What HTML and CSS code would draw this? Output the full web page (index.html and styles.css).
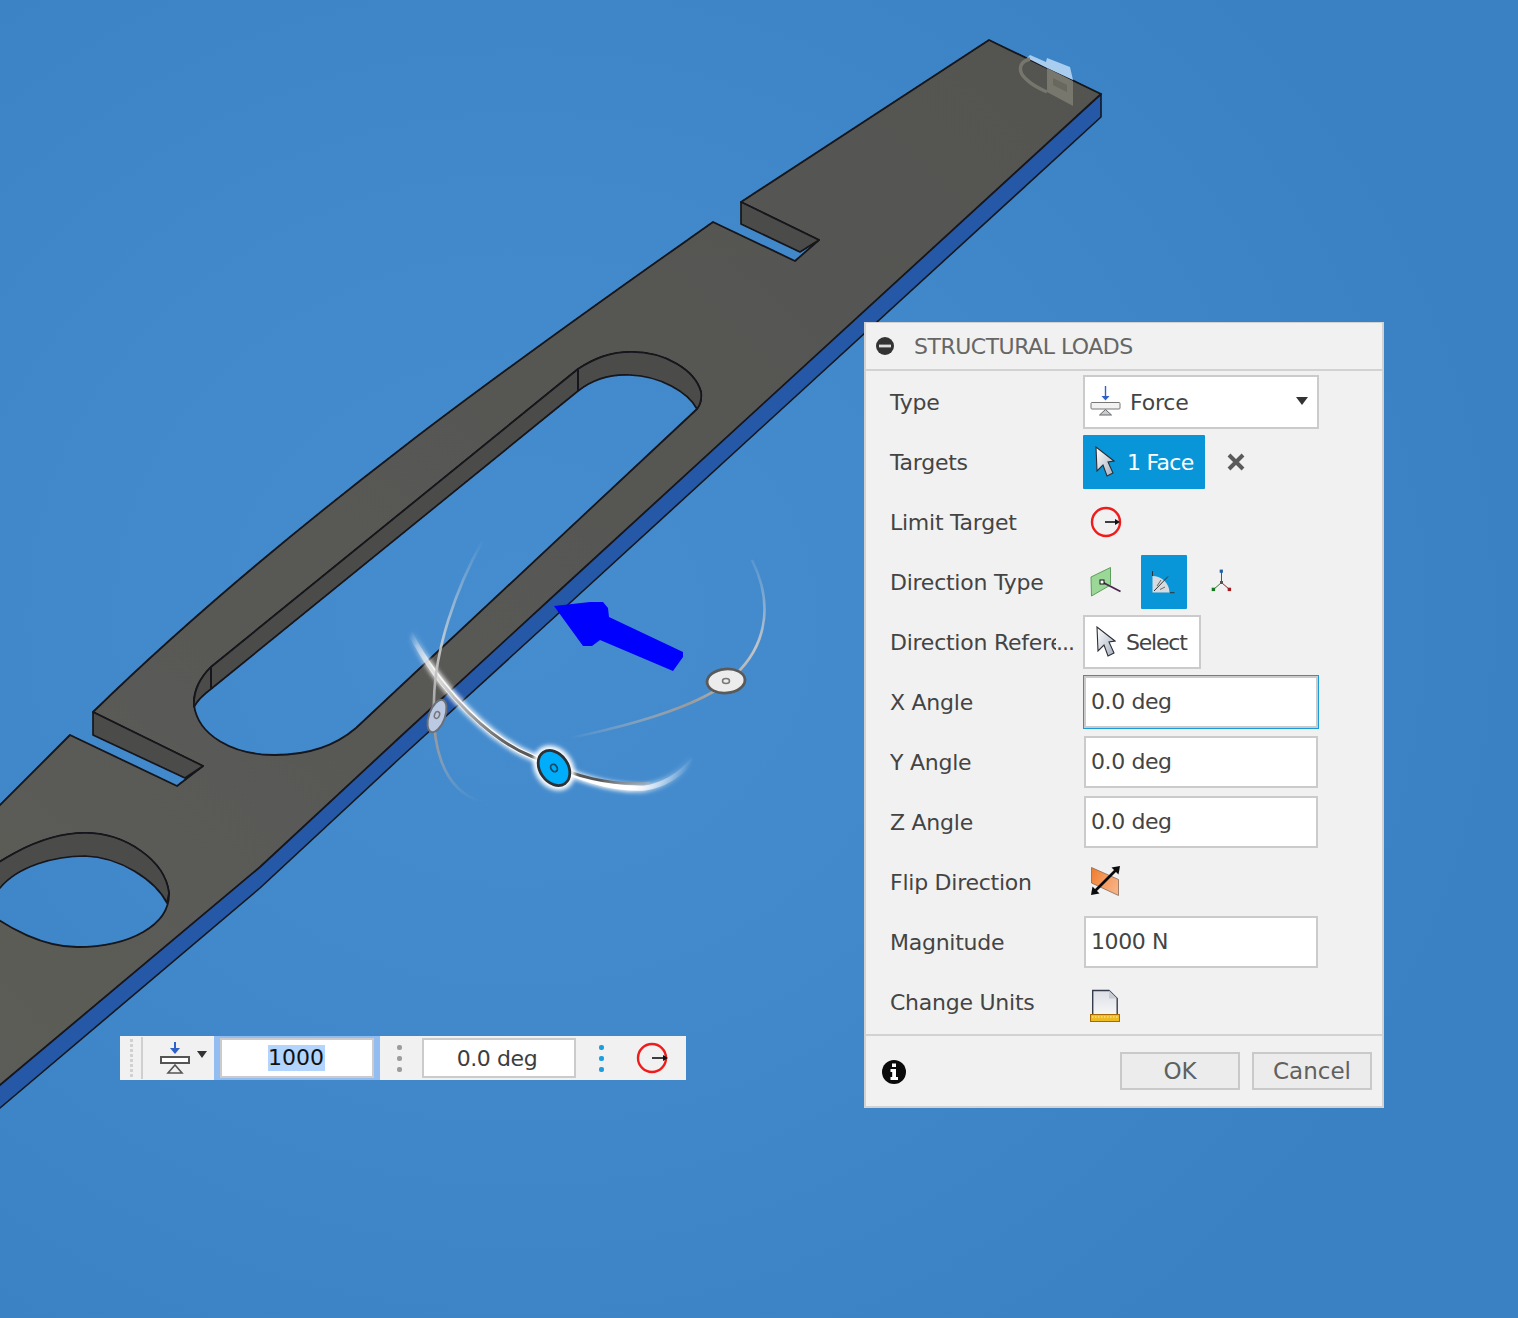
FILE: index.html
```html
<!DOCTYPE html>
<html lang="en">
<head>
<meta charset="utf-8">
<title>Structural Loads</title>
<link rel="stylesheet" href="styles.css">
</head>
<body>
<main class="scene">
  <svg class="model" width="1518" height="1318" viewBox="0 0 1518 1318">
    <defs>
      <linearGradient id="faceShade" x1="0" y1="1" x2="1" y2="0">
        <stop offset="0" stop-color="#5c5c58"/>
        <stop offset="1" stop-color="#535350"/>
      </linearGradient>
      <filter id="soft" x="-20%" y="-20%" width="140%" height="140%"><feGaussianBlur stdDeviation="2.2"/></filter>
      <filter id="soft1" x="-20%" y="-20%" width="140%" height="140%"><feGaussianBlur stdDeviation="0.7"/></filter>
      <filter id="edgeSoft" x="-5%" y="-5%" width="110%" height="110%"><feGaussianBlur stdDeviation="0.45"/></filter>
      <linearGradient id="fadeA" gradientUnits="userSpaceOnUse" x1="410" y1="633" x2="693" y2="760">
        <stop offset="0" stop-color="#fff" stop-opacity="0"/>
        <stop offset="0.12" stop-color="#fff" stop-opacity=".85"/>
        <stop offset="0.85" stop-color="#fff"/>
        <stop offset="1" stop-color="#fff" stop-opacity="0"/>
      </linearGradient>
      <linearGradient id="coreA" gradientUnits="userSpaceOnUse" x1="410" y1="633" x2="693" y2="760">
        <stop offset="0" stop-color="#ddd" stop-opacity="0"/>
        <stop offset="0.2" stop-color="#c4c4c4"/>
        <stop offset="0.45" stop-color="#5a5a5a"/>
        <stop offset="0.75" stop-color="#555"/>
        <stop offset="0.95" stop-color="#ccc" stop-opacity=".4"/>
      </linearGradient>
      <linearGradient id="fadeB" gradientUnits="userSpaceOnUse" x1="760" y1="555" x2="570" y2="738">
        <stop offset="0" stop-color="#ddd" stop-opacity="0"/>
        <stop offset="0.25" stop-color="#c4c4c4"/>
        <stop offset="0.6" stop-color="#9a9a9a"/>
        <stop offset="1" stop-color="#ccc" stop-opacity="0"/>
      </linearGradient>
      <linearGradient id="fadeC" gradientUnits="userSpaceOnUse" x1="483" y1="540" x2="480" y2="802">
        <stop offset="0" stop-color="#ddd" stop-opacity="0"/>
        <stop offset="0.4" stop-color="#d4d4d4" stop-opacity=".85"/>
        <stop offset="0.75" stop-color="#999"/>
        <stop offset="1" stop-color="#bbb" stop-opacity="0"/>
      </linearGradient>
    </defs>

    <g filter="url(#edgeSoft)">
      <!-- side band -->
      <path class="band" d="M1101,94 L1101,117 L560,612 L400,758 L260,888 L0,1108 L-30,1133 L-30,1110 Z"/>

      <!-- top face with holes -->
      <path class="face" fill="url(#faceShade)" fill-rule="evenodd" d="M989,40 L1101,94 L560,590 L400,737 L260,867 L0,1085 L-30,1110 L-30,835 L70,735 L177,786 L203,766 L93,712 C300,510 560,330 713,222 L795,261 L819,240 L741,202 Z
        M211,667 L578,369 C595,358 610,352 632,352 C665,352 695,370 701,392 C702,400 700,405 697,409 L356,728 C335,746 310,755 275,755 C232,755 198,735 194,705 C193,690 200,678 211,667 Z
        M-40,890 C-20,875 30,833 85,833 C125,833 165,860 169,893 C170,925 130,947 77,947 C50,947 10,935 -40,890 Z"/>

      <!-- slot inner walls -->
      <path class="wall" d="M211,667 L578,369 C595,358 610,352 632,352 C665,352 695,370 701,392 C702,400 700,405 697,409 C688,392 660,376 630,375 C610,374 592,380 578,391 L211,689 C203,695 197,701 194,707 C193,690 200,678 211,667 Z"/>
      <path class="edge" d="M578,369 L578,391 M211,667 L211,689"/>

      <!-- round hole wall -->
      <path class="wall" d="M-40,890 C-20,875 30,833 85,833 C125,833 165,860 169,893 L167,903 C155,880 120,857 85,856 C55,856 18,866 0,888 L-40,900 Z"/>

      <!-- notches -->
      <path class="wall" d="M741,202 L819,240 L800,252 L741,224 Z"/>
      <path class="wall" d="M93,712 L203,766 L185,778 L93,735 Z"/>

      <!-- ghost logo on the far end -->
      <path class="ghost-blue" d="M1027,58 L1030,55 L1046,62 L1047,58 L1070,67 L1073,80 L1047,68 Z"/>
      <path class="ghost-face" d="M1047,68 L1073,81 L1073,106 L1047,92 Z"/>
      <path class="ghost-hole" d="M1053,78 L1067,85 L1067,92 L1053,85 Z"/>
      <path class="ghost-arc" d="M1030,59 C1018,62 1018,72 1026,79 C1032,85 1040,89 1047,92"/>

      <!-- gizmo arcs -->
      <path class="arc-glow" stroke="url(#fadeA)" filter="url(#soft)" d="M410,633 C440,690 490,740 533,757 C575,777 610,790 645,788 C665,785 680,775 693,760"/>
      <path class="arc-glow-thin" stroke="url(#fadeA)" filter="url(#soft1)" d="M410,633 C440,690 490,740 533,757 C575,777 610,790 645,788 C665,785 680,775 693,760"/>
      <path class="arc-core" stroke="url(#coreA)" d="M416,645 C445,695 490,740 533,757 C575,777 610,786 650,783"/>
      <path class="arc-thin" stroke="url(#fadeB)" d="M752,560 C772,600 768,640 740,670 C725,690 680,715 570,738"/>
      <path class="arc-thin" stroke="url(#fadeC)" d="M483,540 C455,590 435,650 434,700 C432,740 440,790 482,802"/>

      <!-- handles -->
      <ellipse class="h-glow" cx="554" cy="768" rx="19" ry="24" transform="rotate(-35 554 768)" filter="url(#soft)"/>
      <ellipse class="h-blue" cx="554" cy="768" rx="14" ry="19" transform="rotate(-35 554 768)"/>
      <ellipse class="h-mark" cx="554" cy="768" rx="3" ry="4" transform="rotate(-35 554 768)"/>
      <ellipse class="h-white" cx="726" cy="681" rx="19" ry="12" transform="rotate(-5 726 681)"/>
      <ellipse class="h-mark-l" cx="726" cy="681" rx="3.5" ry="2.5"/>
      <ellipse class="h-pale" cx="437" cy="716" rx="8" ry="17" transform="rotate(20 437 716)"/>
      <ellipse class="h-mark-l" cx="437" cy="715" rx="2.5" ry="3.5" transform="rotate(20 437 715)"/>

      <!-- load arrow -->
      <polygon class="load" points="554,606 590,602 603,602 608,608 609,617 683,652 683,657 673,671 600,640 592,646 583,646"/>
    </g>
  </svg>

  <section class="panel">
    <header class="panel-head">
      <svg width="18" height="18" viewBox="876 337 18 18">
        <circle cx="885" cy="346" r="9" fill="#333"/>
        <rect x="879" y="344.6" width="12" height="2.8" fill="#ddd"/>
      </svg>
      <h1 class="panel-title">STRUCTURAL LOADS</h1>
    </header>

    <div class="rows">
      <div class="row">
        <span class="label">Type</span>
        <div class="field select">
          <svg width="32" height="32" viewBox="1090 386 32 32">
            <line x1="1105.5" y1="386" x2="1105.5" y2="397" stroke="#2f62c4" stroke-width="1.4"/>
            <polygon points="1101.5,396 1109.5,396 1105.5,400.5" fill="#2f62c4"/>
            <rect x="1091" y="402.5" width="29" height="6.5" rx="1" fill="#f2f2f2" stroke="#777"/>
            <polygon points="1105.5,409.5 1099.5,415 1111.5,415" fill="#c9cdd2" stroke="#666"/>
          </svg>
          <span class="field-text">Force</span>
          <span class="caret"></span>
        </div>
      </div>

      <div class="row">
        <span class="label">Targets</span>
        <div class="pick-group">
          <div class="pick pick-on">
            <svg width="20" height="32" viewBox="1096 446 20 32">
              <defs>
                <linearGradient id="curA" x1="0" y1="0" x2="1" y2="1">
                  <stop offset="0" stop-color="#fff"/><stop offset="1" stop-color="#a6afbe"/>
                </linearGradient>
              </defs>
              <path d="M1097,447 L1098,471 L1104,465 L1108,476 L1114,473 L1109,462 L1115,461 Z" fill="url(#curA)" stroke="#2c2f36" stroke-width="1.1"/>
            </svg>
            <span class="pick-text">1 Face</span>
          </div>
          <svg class="clear" width="18" height="18" viewBox="1228 453 18 18">
            <path d="M1230,455 L1244,469 M1244,455 L1230,469" stroke="#5a5a5a" stroke-width="4"/>
          </svg>
        </div>
      </div>

      <div class="row">
        <span class="label">Limit Target</span>
        <svg class="icon-limit" width="32" height="32" viewBox="1090 506 32 32">
          <circle cx="1106" cy="522" r="14" fill="none" stroke="#f01c1c" stroke-width="2.4"/>
          <line x1="1105" y1="522" x2="1116" y2="522" stroke="#111" stroke-width="1.6"/>
          <polygon points="1115,519 1120,522 1115,525" fill="#111"/>
        </svg>
      </div>

      <div class="row">
        <span class="label">Direction Type</span>
        <div class="dir-group">
          <svg width="32" height="32" viewBox="1090 566 32 32">
            <polygon points="1091,577 1110.5,567.5 1110.5,585 1091.5,596" fill="#9bd898" stroke="#5d9e5d"/>
            <line x1="1102" y1="582" x2="1120.5" y2="591.5" stroke="#4a2350" stroke-width="1.8"/>
            <rect x="1100" y="580" width="4" height="4" fill="#fff" stroke="#111"/>
          </svg>
          <div class="dir-on">
            <svg width="34" height="30" viewBox="1149 569 34 30">
              <path d="M1152.5,592.5 L1152.5,576 A17,17 0 0 1 1169.5,592.5 Z" fill="#d7dade"/>
              <path d="M1152.5,571 V576 M1170,592.7 H1174.5 M1154,591 L1168,576.5" stroke="#333" stroke-width="1" fill="none"/>
              <path d="M1157,586 L1161,580 M1160,589.5 L1165,587" stroke="#666" stroke-width="1" fill="none"/>
            </svg>
          </div>
          <svg class="triad" width="24" height="26" viewBox="1210 569 24 26">
            <line x1="1221.5" y1="571" x2="1221.5" y2="582.5" stroke="#2a5f9e" stroke-width="1"/>
            <line x1="1221.5" y1="582.5" x2="1213.5" y2="589.5" stroke="#2b7a2b" stroke-width="1"/>
            <line x1="1221.5" y1="582.5" x2="1229.5" y2="589.5" stroke="#9a2222" stroke-width="1"/>
            <rect x="1219.7" y="569.6" width="3.2" height="3.2" fill="#1f5fa8"/>
            <rect x="1211.7" y="587.7" width="3.4" height="3.4" fill="#14791c"/>
            <rect x="1227.7" y="587.7" width="3.4" height="3.4" fill="#a01c20"/>
            <rect x="1220" y="581" width="3" height="3" fill="#555"/>
          </svg>
        </div>
      </div>

      <div class="row">
        <span class="label label-cut"><span class="cut">Direction Refere</span><span class="more">...</span></span>
        <div class="pick pick-off">
          <svg width="20" height="32" viewBox="1096 626 20 32">
            <defs>
              <linearGradient id="curB" x1="0" y1="0" x2="1" y2="1">
                <stop offset="0" stop-color="#fff"/><stop offset="1" stop-color="#a6afbe"/>
              </linearGradient>
            </defs>
            <path d="M1097,627 L1098,651 L1104,645 L1108,656 L1114,653 L1109,642 L1115,641 Z" fill="url(#curB)" stroke="#2c2f36" stroke-width="1.1"/>
          </svg>
          <span class="pick-text-dark">Select</span>
        </div>
      </div>

      <div class="row"><span class="label">X Angle</span><div class="field text focus">0.0 deg</div></div>
      <div class="row"><span class="label">Y Angle</span><div class="field text">0.0 deg</div></div>
      <div class="row"><span class="label">Z Angle</span><div class="field text">0.0 deg</div></div>

      <div class="row">
        <span class="label">Flip Direction</span>
        <svg class="icon-flip" width="32" height="34" viewBox="1090 864 32 34">
          <defs>
            <linearGradient id="flipFill" x1="0" y1="0" x2="1" y2="0.6">
              <stop offset="0" stop-color="#ee7b2c"/><stop offset="0.55" stop-color="#f59a5c"/><stop offset="1" stop-color="#f6b083"/>
            </linearGradient>
          </defs>
          <polygon points="1091.5,867.5 1118.5,879.5 1118.5,895.5 1091.5,883" fill="url(#flipFill)" stroke="#8a6a55" stroke-width=".8"/>
          <line x1="1095" y1="891" x2="1116" y2="870" stroke="#0b0b0b" stroke-width="2.6"/>
          <polygon points="1120,866 1118.5,874.5 1111.5,867.5" fill="#0b0b0b"/>
          <polygon points="1091,895 1092.5,886.5 1099.5,893.5" fill="#0b0b0b"/>
        </svg>
      </div>

      <div class="row"><span class="label">Magnitude</span><div class="field text">1000 N</div></div>

      <div class="row">
        <span class="label">Change Units</span>
        <svg class="icon-units" width="32" height="34" viewBox="1089 989 32 34">
          <defs>
            <linearGradient id="docFill" x1="0" y1="0" x2="0" y2="1">
              <stop offset="0" stop-color="#dcdfe6"/><stop offset="1" stop-color="#f7f7f7"/>
            </linearGradient>
          </defs>
          <path d="M1092.7,1015 V990.5 H1109 L1117.2,998.5 V1015" fill="url(#docFill)" stroke="#363c4c" stroke-width="1.4"/>
          <path d="M1109,990.5 V998.5 H1117.2 Z" fill="#c9ccd3"/>
          <rect x="1090.5" y="1014.5" width="29" height="7" fill="#eebb22" stroke="#a86a00"/>
          <line x1="1092" y1="1017" x2="1118" y2="1017" stroke="#fff4c0" stroke-dasharray="1.5 1.5"/>
        </svg>
      </div>
    </div>

    <footer class="panel-foot">
      <svg class="info" width="24" height="24" viewBox="882 1060 24 24">
        <circle cx="894" cy="1072" r="12" fill="#0a0a0a"/>
        <rect x="892" y="1063.5" width="4" height="3.5" fill="#fff"/>
        <path d="M890.5,1069 H896 V1077 H898 V1080 H890.5 V1077 H892.2 V1072 H890.5 Z" fill="#fff"/>
      </svg>
      <div class="buttons">
        <button class="btn" type="button">OK</button>
        <button class="btn" type="button">Cancel</button>
      </div>
    </footer>
  </section>

  <div class="toolbar">
    <span class="grip"></span>
    <span class="tool-sep"></span>
    <svg class="tool-icon" width="32" height="34" viewBox="159 1041 32 34">
      <line x1="175" y1="1042" x2="175" y2="1053" stroke="#2f62c8" stroke-width="2"/>
      <polygon points="170,1048 180,1048 175,1054" fill="#2f62c8"/>
      <rect x="161" y="1057" width="28" height="6" fill="#fff" stroke="#555" stroke-width="2"/>
      <polygon points="175,1065 168,1073 182,1073" fill="none" stroke="#555" stroke-width="1.6"/>
    </svg>
    <span class="tool-caret"></span>
    <div class="tool-focus"><div class="tool-field"><span class="selected">1000</span></div></div>
    <span class="dots"><i></i><i></i><i></i></span>
    <div class="tool-field second">0.0 deg</div>
    <span class="dots dots-blue"><i></i><i></i><i></i></span>
    <svg class="tool-limit" width="32" height="32" viewBox="636 1042 32 32">
      <circle cx="652" cy="1058" r="14" fill="none" stroke="#f01c1c" stroke-width="2.4"/>
      <line x1="652" y1="1058" x2="664" y2="1058" stroke="#111" stroke-width="1.6"/>
      <polygon points="663,1055 668,1058 663,1061" fill="#111"/>
    </svg>
  </div>
</main>
</body>
</html>
```
FILE: styles.css
```css
* { box-sizing: border-box; }

html, body {
  margin: 0;
  padding: 0;
}

body {
  font-family: "DejaVu Sans", "Liberation Sans", sans-serif;
  color: #444;
}

.scene {
  position: relative;
  width: 1518px;
  height: 1318px;
  overflow: hidden;
  background: radial-gradient(ellipse 1000px 900px at 520px 620px, #468dcf 0%, #4289cb 45%, #3a81c4 100%);
}

.model {
  position: absolute;
  left: 0;
  top: 0;
  display: block;
}

/* model */
.band { fill: #2558a8; stroke: #14181f; stroke-width: 1.6; stroke-linejoin: round; }
.face { stroke: #14141a; stroke-width: 1.8; stroke-linejoin: round; }
.wall { fill: #4b4b4a; stroke: #14141a; stroke-width: 1.7; stroke-linejoin: round; }
.edge { fill: none; stroke: #14141a; stroke-width: 1.8; }
.ghost-blue { fill: #a9cdee; }
.ghost-face { fill: #77776d; }
.ghost-hole { fill: #68685f; }
.ghost-arc { fill: none; stroke: #76766c; stroke-width: 3.5; }
.arc-glow { fill: none; stroke-width: 8; }
.arc-glow-thin { fill: none; stroke-width: 5; }
.arc-core { fill: none; stroke-width: 3; }
.arc-thin { fill: none; stroke-width: 2.6; }
.h-glow { fill: #fff; }
.h-blue { fill: #00adfb; stroke: #2b3138; stroke-width: 2.8; }
.h-mark { fill: none; stroke: #1a4a66; stroke-width: 1.8; }
.h-white { fill: #ececec; stroke: #5a5a5a; stroke-width: 2.8; }
.h-pale { fill: #bcc9e2; stroke: #6a6f78; stroke-width: 2; }
.h-mark-l { fill: none; stroke: #777; stroke-width: 1.5; }
.load { fill: #0000ff; }

/* panel */
.panel {
  position: absolute;
  left: 864px;
  top: 322px;
  width: 520px;
  height: 786px;
  background: #f1f1f1;
  border: 2px solid #d2d2d2;
  border-top-width: 1px;
  display: flex;
  flex-direction: column;
}

.panel-head {
  height: 48px;
  flex: none;
  display: flex;
  align-items: center;
  gap: 20px;
  padding-left: 10px;
  border-bottom: 2px solid #d2d2d2;
}

.panel-title {
  margin: 0;
  font-size: 22px;
  font-weight: 400;
  color: #666;
  letter-spacing: -0.5px;
}

.rows {
  display: flex;
  flex-direction: column;
  flex: none;
  padding-top: 1px;
}

.row {
  height: 60px;
  display: flex;
  align-items: center;
  padding-left: 24px;
}

.label {
  width: 193px;
  flex: none;
  font-size: 22px;
  letter-spacing: -0.25px;
  color: #444;
  white-space: nowrap;
}

.label-cut { display: flex; }
.cut { display: block; width: 166px; overflow: hidden; }
.more { letter-spacing: -1px; }

.field {
  background: #fff;
  border: 2px solid #cbcbcb;
  font-size: 22px;
  color: #444;
}

.select {
  width: 236px;
  height: 54px;
  display: flex;
  align-items: center;
  padding: 0 9px 0 5px;
}

.field-text { margin-left: 8px; letter-spacing: -0.2px; }

.caret {
  margin-left: auto;
  width: 0;
  height: 0;
  border-left: 6px solid transparent;
  border-right: 6px solid transparent;
  border-top: 8px solid #333;
  position: relative;
  top: -1px;
}

.text {
  width: 234px;
  height: 52px;
  margin-left: 1px;
  display: flex;
  align-items: center;
  padding: 0 0 2px 5px;
  letter-spacing: -0.4px;
}

.focus { box-shadow: 0 0 0 1px #1a9ad9; }

.pick-group { display: flex; align-items: center; }

.pick {
  height: 54px;
  display: flex;
  align-items: center;
  font-size: 22px;
  padding-left: 12px;
}

.pick-on {
  width: 122px;
  background: #0896d8;
  border-radius: 1px;
  color: #fff;
}

.pick-text { margin-left: 12px; letter-spacing: -0.7px; }

.pick-off {
  width: 118px;
  background: #fff;
  border: 2px solid #cbcbcb;
  padding-left: 11px;
}

.pick-text-dark { margin-left: 10px; color: #444; letter-spacing: -1.2px; }

.clear { margin-left: 22px; }

.icon-limit { margin-left: 7px; }
.icon-flip { margin-left: 7px; position: relative; top: -1px; }
.icon-units { margin-left: 6px; position: relative; top: 4px; }

.dir-group {
  display: flex;
  align-items: center;
  margin-left: 7px;
}

.dir-on {
  width: 46px;
  height: 54px;
  margin-left: 19px;
  background: #0896d8;
  border-radius: 1px;
  display: flex;
  padding: 14px 0 0 8px;
}

.triad { margin-left: 23px; }

.panel-foot {
  flex: 1;
  margin: 2px -2px 0;
  border-top: 2px solid #d2d2d2;
  display: flex;
  align-items: center;
  justify-content: space-between;
  padding: 0 12px 0 18px;
}

.info { margin-top: 2px; }

.buttons { display: flex; gap: 12px; }

.btn {
  width: 120px;
  height: 38px;
  padding: 0;
  background: #ececec;
  border: 2px solid #c9c9c9;
  border-radius: 0;
  font-family: inherit;
  font-size: 23px;
  color: #606060;
}

/* floating toolbar */
.toolbar {
  position: absolute;
  left: 120px;
  top: 1036px;
  width: 566px;
  height: 44px;
  background: #f1f1f1;
  display: flex;
  align-items: center;
}

.grip {
  width: 6px;
  height: 40px;
  margin-left: 9px;
  background-image: radial-gradient(circle, #d0d0d0 1.4px, transparent 1.6px);
  background-size: 5px 5px;
}

.tool-sep {
  width: 2px;
  height: 42px;
  margin-left: 6px;
  background: #cfcfcf;
}

.tool-icon { margin-left: 16px; }

.tool-caret {
  width: 0;
  height: 0;
  margin-left: 6px;
  margin-top: -8px;
  border-left: 5.5px solid transparent;
  border-right: 5.5px solid transparent;
  border-top: 7px solid #333;
}

.tool-focus {
  width: 166px;
  height: 44px;
  margin-left: 7px;
  padding: 2px 6px;
  background: #93bcf0;
}

.tool-field {
  width: 154px;
  height: 40px;
  background: #fff;
  border: 2px solid #cbcbcb;
  display: flex;
  align-items: center;
  justify-content: center;
  font-size: 22px;
  color: #3d3d3d;
}

.selected {
  background: #b3d4fc;
  color: #111;
  line-height: 26px;
  height: 26px;
  padding: 0 0.5px;
  margin-left: -2px;
}

.second { letter-spacing: -0.4px; padding-right: 4px; }

.dots {
  width: 42px;
  display: flex;
  flex-direction: column;
  align-items: center;
  gap: 6px;
  padding-right: 4px;
}

.dots i {
  display: block;
  width: 5px;
  height: 5px;
  border-radius: 2px;
  background: #9c9c9c;
}

.dots-blue {
  width: 50px;
  padding-right: 0;
}

.dots-blue i { background: #1a9fe0; }

.tool-limit { margin-left: 10px; }
```
